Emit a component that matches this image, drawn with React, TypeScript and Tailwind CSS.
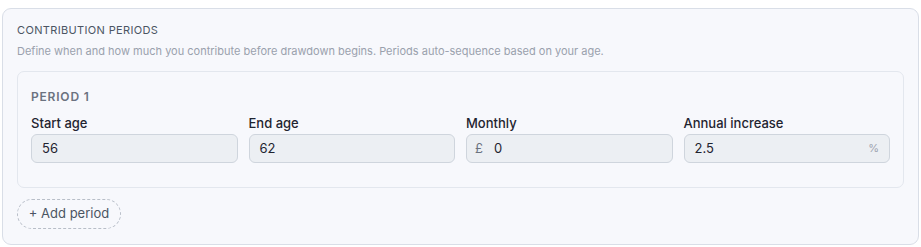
import React from "react";

const font = { fontFamily: "Inter, 'Liberation Sans', sans-serif" };

function Field({ label, value, prefix, suffix }: { label: string; value: string; prefix?: string; suffix?: string }) {
  return (
    <div className="flex flex-col">
      <label className="text-[13px] leading-[18px] text-[#1f2430] font-medium">{label}</label>
      <div className={`mt-[2px] h-[29px] flex items-center rounded-[6px] border border-[#cfd5dd] bg-[#eceff3] pr-[10px] ${prefix ? "pl-[8px]" : "pl-[10px]"}`}>
        {prefix && <span className="text-[13px] text-[#6b7280] mr-[11px]">{prefix}</span>}
        <span className="flex-1 text-[13px] text-[#1f2430]">{value}</span>
        {suffix && <span className="text-[11px] text-[#9ca3af]">{suffix}</span>}
      </div>
    </div>
  );
}

export default function App() {
  return (
    <div className="px-[2px] pt-2 bg-white min-h-[247px]" style={font}>
      <div className="rounded-[9px] border border-[#d9dee7] bg-[#f7f8fc] px-[14px] pt-[13px] pb-[15px]">
        <div className="text-[11px] leading-[16px] uppercase text-[#4b5563] tracking-[0.35px]">Contribution periods</div>
        <div className="mt-[5px] text-[11px] leading-[16px] text-[#9aa1ad]">
          Define when and how much you contribute before drawdown begins. Periods auto-sequence based on your age.
        </div>
        <div className="mt-[12px] rounded-[7px] border border-[#e3e7ee] bg-[#f7f8fc] px-[13px] pt-[17px] pb-[24px]">
          <div className="text-[12px] leading-[16px] font-semibold uppercase tracking-[0.8px] text-[#6b7280]">Period 1</div>
          <div className="mt-[9px] grid grid-cols-4 gap-[11px]">
            <Field label="Start age" value="56" />
            <Field label="End age" value="62" />
            <Field label="Monthly" value="0" prefix="£" />
            <Field label="Annual increase" value="2.5" suffix="%" />
          </div>
        </div>
        <button className="mt-[11px] h-[30px] w-[104px] rounded-full border border-dashed border-[#b8bec8] text-[13px] text-[#4b5563]">
          + Add period
        </button>
      </div>
    </div>
  );
}
